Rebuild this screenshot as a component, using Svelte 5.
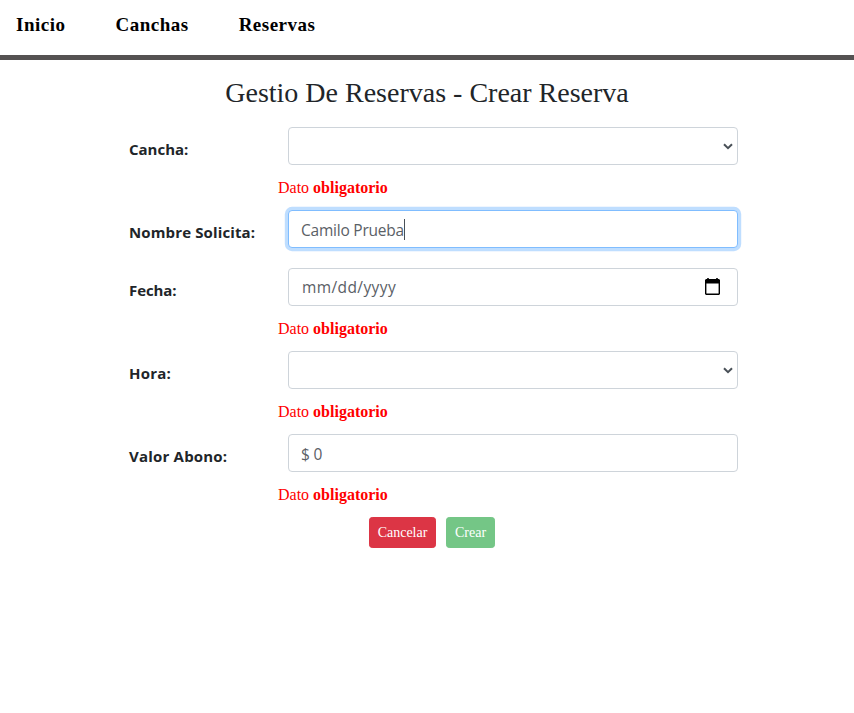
<script>
  const links = ['Inicio', 'Canchas', 'Reservas'];
  const fields = [
    { id: 'cancha', label: 'Cancha:', type: 'select', required: true },
    { id: 'nombre', label: 'Nombre Solicita:', type: 'text', value: 'Camilo Prueba', focused: true },
    { id: 'fecha', label: 'Fecha:', type: 'date', value: 'mm/dd/yyyy', required: true },
    { id: 'hora', label: 'Hora:', type: 'select', required: true },
    { id: 'valor', label: 'Valor Abono:', type: 'text', value: '$ 0', required: true }
  ];
</script>

<nav>
  {#each links as link}
    <a href="#{link.toLowerCase()}">{link}</a>
  {/each}
</nav>

<main>
  <h3>Gestio De Reservas - Crear Reserva</h3>
  {#each fields as field}
    <div class="group">
      <div class="row">
        <span class="label {field.id}">{field.label}</span>
        <div class="control {field.type}" class:focused={field.focused}>
          {#if field.value}<span class="value">{field.value}</span>{/if}
          {#if field.focused}<i class="caret"></i>{/if}
          {#if field.type === 'select'}
            <svg class="chevron" width="10" height="7" viewBox="0 0 10 7">
              <path d="M1 1.2 5 5.2 9 1.2" fill="none" stroke="#495057" stroke-width="2" />
            </svg>
          {:else if field.type === 'date'}
            <svg class="calendar" width="15" height="17" viewBox="0 0 15 17">
              <path d="M1 1h13l1 1v14l-1 1H1l-1-1V2zM1.4 5.5v10h12.2v-10z" fill="#000" fill-rule="evenodd" />
              <path d="M2.2 0h1.6v2H2.2zM11.2 0h1.6v2h-1.6z" fill="#000" />
            </svg>
          {/if}
        </div>
      </div>
      {#if field.required}
        <div class="error">Dato <strong>obligatorio</strong></div>
      {/if}
    </div>
  {/each}
  <div class="actions">
    <button class="cancel" type="button">Cancelar</button>
    <button class="create" type="button">Crear</button>
  </div>
</main>

<style>
  :global(body) {
    background: #fff;
    color: #212529;
    font-family: 'Liberation Serif', 'Times New Roman', serif;
    font-size: 16px;
    line-height: 24px;
  }
  nav {
    box-sizing: border-box;
    height: 60px;
    padding: 10px 16px 0;
    display: flex;
    gap: 50px;
    border-bottom: 5px solid #555252;
  }
  nav a {
    color: #000;
    font-size: 19px;
    letter-spacing: 0.5px;
    font-weight: 700;
    line-height: 30px;
    text-decoration: none;
  }
  main {
    padding-top: 16px;
  }
  h3 {
    margin: 0 0 17px;
    font-size: 28px;
    font-weight: 400;
    line-height: 34px;
    text-align: center;
  }
  .group {
    width: 610px;
    margin: 0 0 20px 129px;
  }
  .group:has(.error) {
    margin-bottom: 10px;
  }
  .row {
    display: flex;
    height: 38px;
  }
  .label {
    width: 159px;
    padding-top: 10px;
    font-family: 'Open Sans', 'Noto Sans', sans-serif;
    font-size: 15px;
    font-weight: 700;
    letter-spacing: 0;
    white-space: nowrap;
  }
  .label.nombre {
    letter-spacing: 0.13px;
  }
  .label.valor,
  .label.hora {
    letter-spacing: 0.2px;
  }
  .label.fecha {
    letter-spacing: -0.1px;
  }
  .control {
    box-sizing: border-box;
    width: 450px;
    height: 38px;
    padding: 1px 4px 0 12px;
    display: flex;
    align-items: center;
    border: 1px solid #ced4da;
    border-radius: 4px;
    background: #fff;
    color: #5a6066;
    font-family: 'Open Sans', 'Noto Sans', sans-serif;
    font-size: 15.5px;
    letter-spacing: -0.22px;
  }
  .focused {
    border-color: #80bdff;
    box-shadow: 0 0 0 3.2px rgba(0, 123, 255, 0.25);
  }
  .date {
    padding: 0 17px 0 13px;
    letter-spacing: 0.4px;
  }
  .caret {
    width: 1px;
    height: 21px;
    background: #495057;
  }
  .chevron,
  .calendar {
    margin-left: auto;
  }
  .calendar {
    margin-bottom: 2px;
  }
  .error {
    padding-top: 11px;
    margin-left: 149px;
    color: #f00;
  }
  .actions {
    display: flex;
    gap: 10px;
    margin-left: 369px;
  }
  button {
    height: 31px;
    padding: 0 7px;
    border: 1px solid;
    border-radius: 3.2px;
    color: #fff;
    font: 14px/21px 'Liberation Serif', 'Times New Roman', serif;
  }
  .cancel {
    width: 67px;
    border-color: #dc3545;
    background: #dc3545;
  }
  .create {
    width: 49px;
    border-color: #74c686;
    background: #74c686;
  }
</style>
